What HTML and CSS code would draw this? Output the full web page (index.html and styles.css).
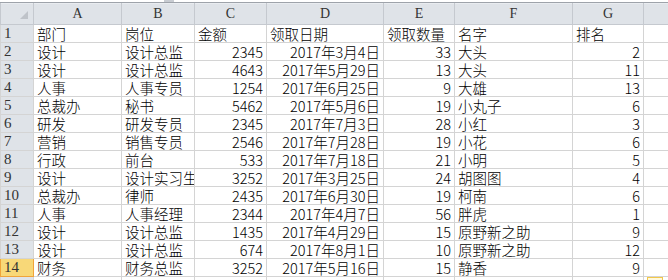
FILE: index.html
```html
<!DOCTYPE html>
<html>
<head>
<meta charset="utf-8">
<link rel="stylesheet" href="styles.css">
</head>
<body>
<div class="topbar"><span class="notch"></span></div>
<table class="sheet">
<colgroup>
<col class="c-rh"><col class="c-a"><col class="c-b"><col class="c-c"><col class="c-d"><col class="c-e"><col class="c-f"><col class="c-g"><col class="c-h">
</colgroup>
<thead>
<tr class="hdr">
<th class="corner"><span class="tri"></span></th><th>A</th><th>B</th><th>C</th><th>D</th><th>E</th><th>F</th><th>G</th><th></th>
</tr>
</thead>
<tbody>
<tr><th>1</th><td>部门</td><td>岗位</td><td>金额</td><td>领取日期</td><td>领取数量</td><td>名字</td><td>排名</td><td></td></tr>
<tr><th>2</th><td>设计</td><td>设计总监</td><td class="n">2345</td><td class="n">2017年3月4日</td><td class="n">33</td><td>大头</td><td class="n">2</td><td></td></tr>
<tr><th>3</th><td>设计</td><td>设计总监</td><td class="n">4643</td><td class="n">2017年5月29日</td><td class="n">13</td><td>大头</td><td class="n">11</td><td></td></tr>
<tr><th>4</th><td>人事</td><td>人事专员</td><td class="n">1254</td><td class="n">2017年6月25日</td><td class="n">9</td><td>大雄</td><td class="n">13</td><td></td></tr>
<tr><th>5</th><td>总裁办</td><td>秘书</td><td class="n">5462</td><td class="n">2017年5月6日</td><td class="n">19</td><td>小丸子</td><td class="n">6</td><td></td></tr>
<tr><th>6</th><td>研发</td><td>研发专员</td><td class="n">2345</td><td class="n">2017年7月3日</td><td class="n">28</td><td>小红</td><td class="n">3</td><td></td></tr>
<tr><th>7</th><td>营销</td><td>销售专员</td><td class="n">2546</td><td class="n">2017年7月28日</td><td class="n">19</td><td>小花</td><td class="n">6</td><td></td></tr>
<tr><th>8</th><td>行政</td><td>前台</td><td class="n">533</td><td class="n">2017年7月18日</td><td class="n">21</td><td>小明</td><td class="n">5</td><td></td></tr>
<tr><th>9</th><td>设计</td><td>设计实习生</td><td class="n">3252</td><td class="n">2017年3月25日</td><td class="n">24</td><td>胡图图</td><td class="n">4</td><td></td></tr>
<tr><th>10</th><td>总裁办</td><td>律师</td><td class="n">2435</td><td class="n">2017年6月30日</td><td class="n">19</td><td>柯南</td><td class="n">6</td><td></td></tr>
<tr><th>11</th><td>人事</td><td>人事经理</td><td class="n">2344</td><td class="n">2017年4月7日</td><td class="n">56</td><td>胖虎</td><td class="n">1</td><td></td></tr>
<tr><th>12</th><td>设计</td><td>设计总监</td><td class="n">1435</td><td class="n">2017年4月29日</td><td class="n">15</td><td>原野新之助</td><td class="n">9</td><td></td></tr>
<tr><th>13</th><td>设计</td><td>设计总监</td><td class="n">674</td><td class="n">2017年8月1日</td><td class="n">10</td><td>原野新之助</td><td class="n">12</td><td></td></tr>
<tr class="active"><th>14</th><td>财务</td><td>财务总监</td><td class="n">3252</td><td class="n">2017年5月16日</td><td class="n">15</td><td>静香</td><td class="n">9</td><td></td></tr>
<tr><th></th><td></td><td></td><td></td><td></td><td></td><td></td><td></td><td><span class="mark"></span></td></tr>
</tbody>
</table>
</body>
</html>
```

FILE: styles.css
```css
html, body {
  margin: 0;
  padding: 0;
  background: #ffffff;
  overflow: hidden;
  width: 668px;
  height: 280px;
}
.topbar {
  height: 2px;
  border-bottom: 1px solid #9ea3aa;
  background: #ffffff;
  position: relative;
}
.notch {
  position: absolute;
  left: 164px;
  top: 0;
  width: 10px;
  height: 2px;
  background: #c8ccd2;
}
.sheet {
  border-collapse: collapse;
  table-layout: fixed;
  width: 700px;
  font-family: "Noto Sans CJK SC", sans-serif;
  font-size: 14.5px;
  font-weight: 300;
  color: #000;
  border-top: 1px solid #e9ecf0;
}
.c-rh { width: 33px; }
.c-a { width: 88px; }
.c-b { width: 73px; }
.c-c { width: 72px; }
.c-d { width: 117px; }
.c-e { width: 71px; }
.c-f { width: 118px; }
.c-g { width: 71px; }
.c-h { width: 57px; }
.sheet td, .sheet th {
  height: 17px;
  padding: 0 2px 0 3px;
  line-height: 17px;
  white-space: nowrap;
  overflow: hidden;
  border: 1px solid #d4d4d4;
  font-weight: 300;
  text-align: left;
  vertical-align: bottom;
}
.sheet td.n {
  text-align: right;
  padding-right: 3px;
}
.hdr th {
  height: 20px;
  line-height: 20px;
  background: #dfe3e8;
  border-color: #c5c9cf;
  border-top: none;
  text-align: center;
  font-family: "Liberation Serif", serif;
  font-size: 14px;
  font-weight: normal;
  color: #333;
  padding: 0;
}
tbody th {
  background: #dfe3e8;
  border-color: #c5c9cf;
  text-align: center;
  font-family: "Liberation Serif", serif;
  font-size: 15px;
  font-weight: normal;
  color: #333;
  padding: 0;
}
.corner {
  position: relative;
}
.tri {
  position: absolute;
  right: 5px;
  bottom: 5px;
  width: 0;
  height: 0;
  border-left: 8px solid transparent;
  border-bottom: 8px solid #bfc3c9;
}
tr.active th {
  background: #f8d878;
  border: 1px solid #f0a43a;
  color: #333;
}
.mark {
  display: inline-block;
  width: 14px;
  height: 6px;
  border: 1px solid #f2c84b;
  border-bottom: none;
  background: #fff8dc;
  vertical-align: top;
}
```
